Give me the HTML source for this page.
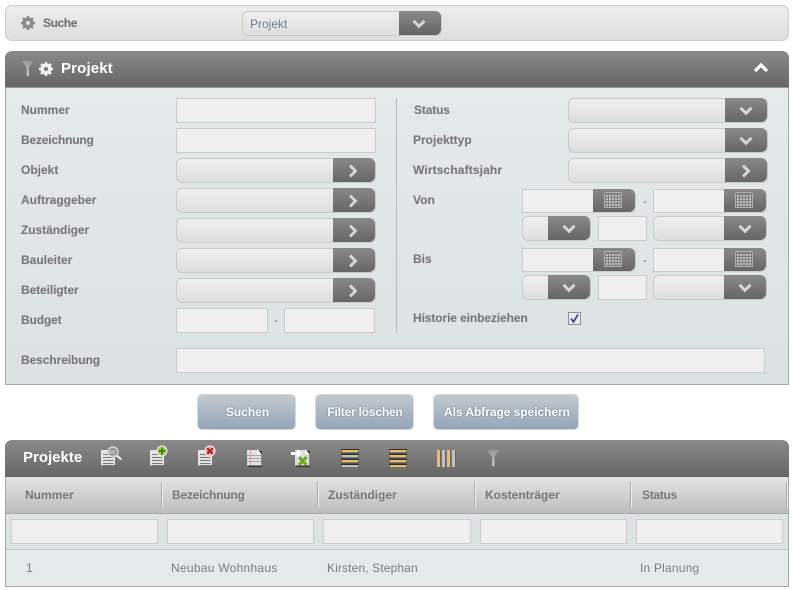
<!DOCTYPE html>
<html><head><meta charset="utf-8"><style>
html,body{margin:0;padding:0;background:#fff;width:792px;height:590px;overflow:hidden}
body{font-family:"Liberation Sans",sans-serif;font-size:12px;color:#777}
div,span{position:absolute;box-sizing:border-box}
svg{position:absolute}
.l{font-weight:bold;color:#77777a;white-space:nowrap;line-height:14px;text-shadow:0 0 1px rgba(120,100,80,.25)}
.i{background:#efefef;border:1px solid #c9cccc;height:25px}
.s{height:25px;border:1px solid #c8cbcb;border-radius:6px;background:linear-gradient(#efefef,#dedede)}
.b{top:-1px;bottom:0;right:0;width:42px;background:linear-gradient(#898989,#666);border-radius:0 6px 6px 0}
.btn{top:394px;height:36px;border-radius:5px;border:1px solid #d5d9dc;background:linear-gradient(#c3cace,#93a5ba);color:#fff;font-weight:bold;text-align:center;line-height:34px;text-shadow:0 0 2px #6d7d90}
.h{top:488px;font-weight:bold;color:#77777a;line-height:14px;white-space:nowrap}
.sep{top:482px;width:1px;height:26px;background:#aaa;box-shadow:1px 0 0 #eee}
.d{top:561px;line-height:14px;color:#7c7c80;white-space:nowrap}
</style></head><body>
<svg width="0" height="0" style="left:0;top:0">
<symbol id="dn" viewBox="0 0 16 10"><path d="M2.500 1.800L8 7.300L13.500 1.800" fill="none" stroke="#d6d6d6" stroke-width="2.900"/></symbol>
<symbol id="rt" viewBox="0 0 12 14"><path d="M3 1.500L8.500 7L3 12.500" fill="none" stroke="#d6d6d6" stroke-width="2.900"/></symbol>
<symbol id="cal" viewBox="0 0 18 16"><path d="M1.500 .5H16.500L17.500 1.500V15.500H.5V1.500Z" fill="#808080" stroke="#b0b0b0"/><path d="M2 4H16M2 7H16M2 10H16M2 13H16" stroke="#bcbcbc" stroke-width="2" stroke-dasharray="2 1"/></symbol>
<symbol id="doc" viewBox="0 0 16 17"><path d="M1 1H14V15H1Z" fill="#111" transform="translate(1 1)"/><rect x="0" y="0" width="14.500" height="15.500" fill="#e3e3e3"/><path d="M2 4.500H12.500M2 7.500H12.500M2 10.500H12.500M2 13.500H12.500" stroke="#7a7a7a"/></symbol>
<symbol id="gear" viewBox="0 0 16 16"><circle cx="8" cy="8" r="3.800" fill="none" stroke="currentColor" stroke-width="3.600"/><path d="M8 1v3M8 12v3M1 8h3M12 8h3M3 3l2 2M11 11l2 2M13 3l-2 2M5 11l-2 2" stroke="currentColor" stroke-width="2.400"/></symbol>
</svg>

<div style="left:5px;top:5px;width:784px;height:36px;border:1px solid #ccc;border-radius:7px;background:linear-gradient(#eee,#ddd)"></div>
<svg style="left:20px;top:15px;color:#8a8a8a" width="16" height="16"><use href="#gear"/></svg>
<div class="l" style="left:43px;top:16px;color:#707070;letter-spacing:-.4px">Suche</div>
<div class="s" style="left:242px;top:11px;width:200px">
 <div style="left:7px;top:5px;font-size:12px;color:#6b7f96;line-height:14px">Projekt</div>
 <div class="b"><svg style="left:12px;top:8px" width="16" height="10"><use href="#dn"/></svg></div>
</div>

<div style="left:5px;top:51px;width:784px;height:334px;background:linear-gradient(#e5ebeb,#dce2e2);border:1px solid #a5a8a8;border-top:0;border-radius:7px 7px 0 0"></div>
<div style="left:5px;top:51px;width:784px;height:37px;background:linear-gradient(#8a8a8a,#666);border-radius:7px 7px 0 0;border-bottom:1px solid #999"></div>
<svg style="left:22px;top:61px" width="11" height="15"><defs><linearGradient id="fg" x1="0" y1="0" x2="0" y2="1"><stop offset="0" stop-color="#999"/><stop offset="1" stop-color="#c4c4c4"/></linearGradient></defs><path d="M0 0H11L7 6.500V15H4.500V6.500Z" fill="url(#fg)"/></svg>
<svg style="left:38px;top:61px;color:#f0f0f0" width="16" height="16"><use href="#gear"/></svg>
<div style="left:61px;top:60px;font-size:15px;font-weight:bold;color:#fff;line-height:18px;letter-spacing:.15px">Projekt</div>
<svg style="left:753px;top:62px" width="16" height="12"><path d="M2 9L8 3L14 9" fill="none" stroke="#fff" stroke-width="3.200"/></svg>

<div class="l" style="left:21px;top:103px">Nummer</div>
<div class="l" style="left:21px;top:133px;letter-spacing:-.18px">Bezeichnung</div>
<div class="l" style="left:21px;top:163px">Objekt</div>
<div class="l" style="left:21px;top:193px">Auftraggeber</div>
<div class="l" style="left:21px;top:223px;letter-spacing:-.05px">Zuständiger</div>
<div class="l" style="left:21px;top:253px">Bauleiter</div>
<div class="l" style="left:21px;top:283px;letter-spacing:-.1px">Beteiligter</div>
<div class="l" style="left:21px;top:313px;letter-spacing:-.15px">Budget</div>
<div class="l" style="left:21px;top:353px;letter-spacing:-.08px">Beschreibung</div>

<div class="i" style="left:176px;top:98px;width:200px"></div>
<div class="i" style="left:176px;top:128px;width:200px"></div>
<div class="s" style="left:176px;top:158px;width:200px"><div class="b"><svg style="left:14px;top:6px" width="12" height="14"><use href="#rt"/></svg></div></div>
<div class="s" style="left:176px;top:188px;width:200px"><div class="b"><svg style="left:14px;top:6px" width="12" height="14"><use href="#rt"/></svg></div></div>
<div class="s" style="left:176px;top:218px;width:200px"><div class="b"><svg style="left:14px;top:6px" width="12" height="14"><use href="#rt"/></svg></div></div>
<div class="s" style="left:176px;top:248px;width:200px"><div class="b"><svg style="left:14px;top:6px" width="12" height="14"><use href="#rt"/></svg></div></div>
<div class="s" style="left:176px;top:278px;width:200px"><div class="b"><svg style="left:14px;top:6px" width="12" height="14"><use href="#rt"/></svg></div></div>
<div class="i" style="left:176px;top:308px;width:92px"></div>
<div style="left:274px;top:313px;line-height:14px">-</div>
<div class="i" style="left:284px;top:308px;width:91px"></div>
<div class="i" style="left:176px;top:348px;width:589px"></div>

<div style="left:396px;top:98px;width:1px;height:235px;background:#b5b9b9"></div>

<div class="l" style="left:414px;top:103px;letter-spacing:-.15px">Status</div>
<div class="l" style="left:413px;top:133px">Projekttyp</div>
<div class="l" style="left:413px;top:163px;letter-spacing:.13px">Wirtschaftsjahr</div>
<div class="l" style="left:413px;top:193px">Von</div>
<div class="l" style="left:413px;top:252px">Bis</div>
<div class="l" style="left:413px;top:311px;letter-spacing:-.1px">Historie einbeziehen</div>

<div class="s" style="left:568px;top:98px;width:200px"><div class="b"><svg style="left:13px;top:8px" width="16" height="10"><use href="#dn"/></svg></div></div>
<div class="s" style="left:568px;top:128px;width:200px"><div class="b"><svg style="left:13px;top:8px" width="16" height="10"><use href="#dn"/></svg></div></div>
<div class="s" style="left:568px;top:158px;width:200px"><div class="b"><svg style="left:15px;top:6px" width="12" height="14"><use href="#rt"/></svg></div></div>

<div class="i" style="left:522px;top:189px;width:114px;height:24px;border-radius:0 6px 6px 0"><div class="b"><svg style="left:11px;top:3px" width="18" height="16"><use href="#cal"/></svg></div></div>
<div style="left:643px;top:194px;line-height:14px">-</div>
<div class="i" style="left:653px;top:189px;width:114px;height:24px;border-radius:0 6px 6px 0"><div class="b"><svg style="left:11px;top:3px" width="18" height="16"><use href="#cal"/></svg></div></div>
<div class="s" style="left:522px;top:216px;width:69px"><div class="b"><svg style="left:13px;top:8px" width="16" height="10"><use href="#dn"/></svg></div></div>
<div class="i" style="left:598px;top:216px;width:49px"></div>
<div class="s" style="left:653px;top:216px;width:114px"><div class="b"><svg style="left:13px;top:8px" width="16" height="10"><use href="#dn"/></svg></div></div>

<div class="i" style="left:522px;top:248px;width:114px;height:24px;border-radius:0 6px 6px 0"><div class="b"><svg style="left:11px;top:3px" width="18" height="16"><use href="#cal"/></svg></div></div>
<div style="left:643px;top:253px;line-height:14px">-</div>
<div class="i" style="left:653px;top:248px;width:114px;height:24px;border-radius:0 6px 6px 0"><div class="b"><svg style="left:11px;top:3px" width="18" height="16"><use href="#cal"/></svg></div></div>
<div class="s" style="left:522px;top:275px;width:69px"><div class="b"><svg style="left:13px;top:8px" width="16" height="10"><use href="#dn"/></svg></div></div>
<div class="i" style="left:598px;top:275px;width:49px"></div>
<div class="s" style="left:653px;top:275px;width:114px"><div class="b"><svg style="left:13px;top:8px" width="16" height="10"><use href="#dn"/></svg></div></div>

<svg style="left:568px;top:312px" width="13" height="13"><rect x=".5" y=".5" width="12" height="12" fill="#e8ecf2" stroke="#8a8f98"/><path d="M3 6.500L5.500 10L10 2.500" fill="none" stroke="#3a4a96" stroke-width="1.800"/></svg>

<div class="btn" style="left:197px;width:99px;padding-left:2px">Suchen</div>
<div class="btn" style="left:315px;width:99px;letter-spacing:-.2px;padding-left:1px">Filter löschen</div>
<div class="btn" style="left:433px;width:146px;letter-spacing:-.05px;padding-left:2px">Als Abfrage speichern</div>

<div style="left:5px;top:440px;width:784px;height:147px;background:#e4eaea;border:1px solid #a5a8a8;border-top:0;border-radius:7px 7px 0 0"></div>
<div style="left:5px;top:440px;width:784px;height:37px;background:linear-gradient(#8a8a8a,#666);border-radius:7px 7px 0 0"></div>
<div style="left:23px;top:449px;font-size:15px;font-weight:bold;color:#fff;line-height:18px">Projekte</div>

<svg style="left:101px;top:450px" width="16" height="17"><use href="#doc"/></svg>
<svg style="left:106px;top:445px" width="17" height="16"><circle cx="7" cy="7" r="5" fill="#9a9a9a" fill-opacity=".7" stroke="#d5d5d5" stroke-width="1.400"/><path d="M10.500 10.500L15.500 14.500" stroke="#eee" stroke-width="2"/></svg>
<svg style="left:150px;top:450px" width="16" height="17"><use href="#doc"/></svg>
<svg style="left:156px;top:445px" width="12" height="12"><circle cx="6" cy="6" r="5.500" fill="#f0f0f0"/><circle cx="6" cy="6" r="4.500" fill="#a8c850"/><path d="M6 2.500v7M2.500 6h7" stroke="#2f7a12" stroke-width="1.600"/></svg>
<svg style="left:198px;top:450px" width="16" height="17"><use href="#doc"/></svg>
<svg style="left:204px;top:445px" width="12" height="12"><circle cx="6" cy="6" r="5.500" fill="#f0f0f0"/><circle cx="6" cy="6" r="4.500" fill="#e6a0a0"/><path d="M3.200 3.200l5.600 5.600M8.800 3.200l-5.600 5.600" stroke="#b01c1c" stroke-width="1.900"/></svg>
<svg style="left:247px;top:449px" width="16" height="18"><path d="M1 2H15V18H1Z" fill="#333"/><path d="M0 1H10L14.500 5V16.500H0Z" fill="#e0e0e0"/><path d="M10 0L14.500 5H10Z" fill="#fff"/><path d="M0 6.500H14M0 9.500H14M0 12.500H14" stroke="#a8a8a8"/><path d="M3.500 1V16.500" stroke="#d9a0a8"/></svg>
<svg style="left:291px;top:448px" width="20" height="19"><path d="M5 3H19V19H5Z" fill="#333"/><path d="M4 2H14L18.500 6V17.500H4Z" fill="#dcdcdc"/><path d="M14 1L18.500 6H14Z" fill="#fff"/><path d="M8 9L15.500 17M15.500 9L8 17" stroke="#6aa81e" stroke-width="2.800"/><path d="M0 4V7H6.500V10L11 5.500L6.500 1V4Z" fill="#fff"/></svg>
<svg style="left:341px;top:449px" width="18" height="19"><g fill="#2a2a2a"><rect y="0" width="18" height="4.500" rx="1"/><rect y="5" width="18" height="4.500" rx="1"/><rect y="10" width="18" height="4.500" rx="1"/><rect y="15" width="18" height="4.500" rx="1"/></g><rect x=".5" y="1" width="17" height="2.500" fill="#e6bd78"/><rect x=".5" y="6" width="17" height="2.500" fill="#c2c2c2"/><rect x=".5" y="11" width="17" height="2.500" fill="#e6bd78"/><rect x=".5" y="16" width="17" height="2.500" fill="#c2c2c2"/></svg>
<svg style="left:389px;top:449px" width="18" height="19"><g fill="#2a2a2a"><rect y="0" width="18" height="4.500" rx="1"/><rect y="5" width="18" height="4.500" rx="1"/><rect y="10" width="18" height="4.500" rx="1"/><rect y="15" width="18" height="4.500" rx="1"/></g><rect x=".5" y="1" width="17" height="2.500" fill="#e6bd78"/><rect x=".5" y="6" width="17" height="2.500" fill="#e6bd78"/><rect x=".5" y="11" width="17" height="2.500" fill="#e6bd78"/><rect x=".5" y="16" width="17" height="2.500" fill="#e6bd78"/></svg>
<svg style="left:437px;top:450px" width="20" height="17"><path d="M3.500 0V17M8.500 0V17M13.500 0V17M18.500 0V17" stroke="#666"/><rect x="0" y="0" width="3" height="17" fill="#e6bd78"/><rect x="5" y="0" width="3" height="17" fill="#c0c0c0"/><rect x="10" y="0" width="3" height="17" fill="#e6bd78"/><rect x="15" y="0" width="3" height="17" fill="#c0c0c0"/></svg>
<svg style="left:487px;top:450px" width="12" height="16"><path d="M0 0H12L7.500 6.500V16H5V6.500Z" fill="url(#fg)"/></svg>

<div style="left:6px;top:477px;width:782px;height:37px;background:linear-gradient(#e4e4e4,#bdbdbd);border-bottom:1px solid #a5a8a8"></div>
<div class="h" style="left:25px">Nummer</div>
<div class="h" style="left:172px;letter-spacing:-.18px">Bezeichnung</div>
<div class="h" style="left:328px">Zuständiger</div>
<div class="h" style="left:485px">Kostenträger</div>
<div class="h" style="left:642px;letter-spacing:-.3px">Status</div>
<div class="sep" style="left:161px"></div>
<div class="sep" style="left:317px"></div>
<div class="sep" style="left:474px"></div>
<div class="sep" style="left:630px"></div>
<div class="sep" style="left:786px"></div>

<div style="left:6px;top:514px;width:782px;height:36px;background:#dde3e3;border-bottom:1px solid #c4c8c8"></div>
<div class="i" style="left:11px;top:519px;width:147px"></div>
<div class="i" style="left:167px;top:519px;width:147px"></div>
<div class="i" style="left:323px;top:519px;width:148px"></div>
<div class="i" style="left:480px;top:519px;width:147px"></div>
<div class="i" style="left:636px;top:519px;width:147px"></div>

<div class="d" style="left:26px">1</div>
<div class="d" style="left:171px;letter-spacing:.27px">Neubau Wohnhaus</div>
<div class="d" style="left:327px;letter-spacing:.13px">Kirsten, Stephan</div>
<div class="d" style="left:640px;letter-spacing:.2px">In Planung</div>
</body></html>
